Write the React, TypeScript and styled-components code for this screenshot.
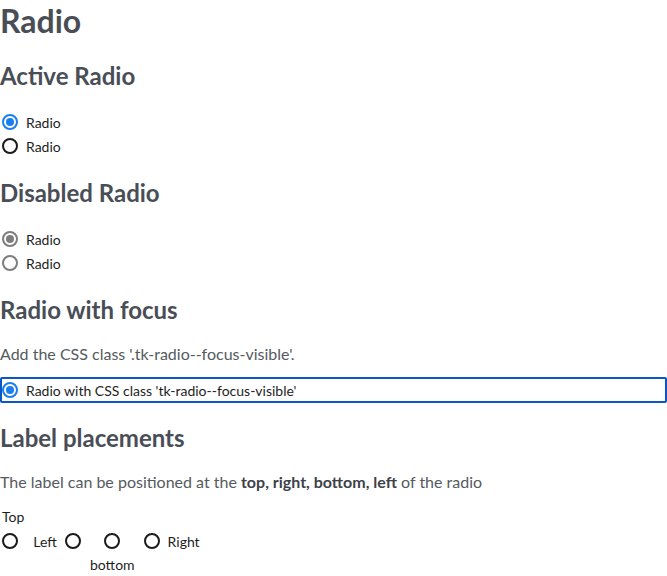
import React from "react";
import styled, { createGlobalStyle, css } from "styled-components";

const Global = createGlobalStyle`
  html, body { margin: 0; padding: 0; background: #ffffff; }
  body { font-family: Lato, "Open Sans", sans-serif; color: #222; }
`;

const Page = styled.main`
  display: flex;
  flex-direction: column;
  width: 667px;
`;

const Title = styled.h1`
  margin: 0;
  font-size: 32px;
  line-height: 41px;
  font-weight: 700;
  color: #494e56;
`;

const Heading = styled.h2`
  margin: 20px 0 19px;
  font-size: 24px;
  line-height: 30px;
  font-weight: 700;
  color: #494e56;
`;

const Text = styled.p`
  margin: 0;
  font-size: 16px;
  line-height: 20px;
  color: #555a60;
  b { font-weight: 700; color: #3d4249; }
`;

const List = styled.div`
  display: flex;
  flex-direction: column;
`;

const Item = styled.label<{ $focus?: boolean }>`
  display: flex;
  align-items: center;
  gap: 8px;
  height: 24px;
  font-size: 14px;
  color: #1e1e1e;
  ${(p) =>
    p.$focus &&
    css`
      height: 22px;
      border: 2px solid #0a56c6;
      border-radius: 2px;
      margin-top: 13px;
    `}
`;

const Radio = styled.span<{ $checked?: boolean; $disabled?: boolean; $flush?: boolean }>`
  box-sizing: border-box;
  flex: none;
  width: 16px;
  height: 16px;
  margin-left: ${(p) => (p.$flush ? 0 : 2)}px;
  border-radius: 50%;
  border: 2px solid ${(p) => (p.$disabled ? "#7d7d7d" : p.$checked ? "#1a7ef0" : "#1a1a1a")};
  display: flex;
  align-items: center;
  justify-content: center;
  &::after {
    content: "";
    width: 8px;
    height: 8px;
    border-radius: 50%;
    background: ${(p) => (p.$disabled ? "#7d7d7d" : "#1a7ef0")};
    display: ${(p) => (p.$checked ? "block" : "none")};
  }
`;

const Placements = styled.div`
  display: flex;
  align-items: flex-start;
  gap: 9px;
  margin-top: 13px;
`;

const Stack = styled.label<{ $align: "start" | "center" }>`
  display: flex;
  flex-direction: column;
  align-items: ${(p) => (p.$align === "start" ? "flex-start" : "center")};
  margin-top: ${(p) => (p.$align === "start" ? 0 : 24)}px;
  font-size: 14px;
  color: #1e1e1e;
`;

const StackText = styled.span<{ $indent?: boolean }>`
  line-height: 24px;
  padding-left: ${(p) => (p.$indent ? 2 : 0)}px;
`;

const StackRadioRow = styled.span`
  display: flex;
  align-items: center;
  height: 24px;
`;

const Inline = styled.label`
  display: flex;
  align-items: center;
  gap: 8px;
  height: 24px;
  margin-top: 24px;
  font-size: 14px;
  color: #1e1e1e;
`;

export default function App() {
  return (
    <>
      <Global />
      <Page>
        <Title>Radio</Title>

        <Heading>Active Radio</Heading>
        <List>
          <Item>
            <Radio $checked />
            Radio
          </Item>
          <Item>
            <Radio />
            Radio
          </Item>
        </List>

        <Heading>Disabled Radio</Heading>
        <List>
          <Item>
            <Radio $checked $disabled />
            Radio
          </Item>
          <Item>
            <Radio $disabled />
            Radio
          </Item>
        </List>

        <Heading>Radio with focus</Heading>
        <Text>Add the CSS class '.tk-radio--focus-visible'.</Text>
        <Item $focus>
          <Radio $checked $flush />
          Radio with CSS class 'tk-radio--focus-visible'
        </Item>

        <Heading>Label placements</Heading>
        <Text>
          The label can be positioned at the <b>top, right, bottom, left</b> of the radio
        </Text>
        <Placements>
          <Stack $align="start">
            <StackText $indent>Top</StackText>
            <StackRadioRow>
              <Radio />
            </StackRadioRow>
          </Stack>
          <Inline>
            Left
            <Radio $flush />
          </Inline>
          <Stack $align="center">
            <StackRadioRow>
              <Radio $flush />
            </StackRadioRow>
            <StackText>bottom</StackText>
          </Stack>
          <Inline>
            <Radio $flush />
            Right
          </Inline>
        </Placements>
      </Page>
    </>
  );
}
